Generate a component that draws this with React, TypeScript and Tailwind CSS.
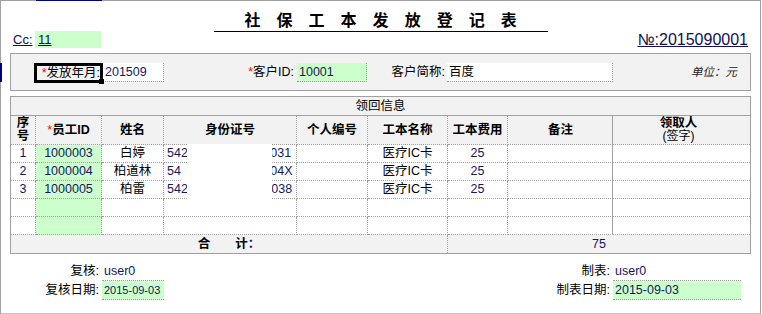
import React from "react";

const rows = [
  { no: "1", id: "1000003", name: "白婷", idc: "542127198811020031", card: "医疗IC卡", fee: "25" },
  { no: "2", id: "1000004", name: "柏道林", idc: "54212719870511204X", card: "医疗IC卡", fee: "25" },
  { no: "3", id: "1000005", name: "柏雷", idc: "542127199002213038", card: "医疗IC卡", fee: "25" },
  { no: "", id: "", name: "", idc: "", card: "", fee: "" },
  { no: "", id: "", name: "", idc: "", card: "", fee: "" },
];

export default function App() {
  const cell = "h-[18px] border-b border-r border-dotted border-[#a0a0a0] leading-[17px] whitespace-nowrap overflow-hidden";
  const head =
    "h-[29px] bg-[#f2f2f2] border-b border-r border-dotted border-[#a0a0a0] flex flex-col items-center justify-center font-bold leading-[13px] whitespace-nowrap";
  return (
    <div className="w-[762px] h-[314px] bg-white text-[12.5px] text-black font-['Liberation_Sans','Noto_Sans_CJK_SC',sans-serif]">
      <div className="relative w-[761px] h-[314px] border border-[#a0a0a0] border-b-[#c4c4c4]">
        <div className="absolute -top-px left-[35px] w-[66px] h-px bg-[#000080]" />
        <div className="absolute -left-px top-[62px] w-[2px] h-[19px] bg-[#000080]" />

        {/* title */}
        <div className="mx-auto w-[334px] h-[31px] border-b border-black pt-[12px] pl-[6px] text-center text-[16px] leading-[16px] font-bold tracking-[5.8px] whitespace-nowrap">
          社 保 工 本 发 放 登 记 表
        </div>

        {/* Cc / No row */}
        <div className="-mt-px flex h-[17px] items-end justify-between pl-[12px] pr-[12px]">
          <div className="flex items-end h-[17px]">
            <span className="w-[22px] text-[13px] leading-[17px] underline text-[#101050]">Cc:</span>
            <span className="w-[66px] h-[17px] bg-[#ccffcc] pl-[3px] text-[13px] leading-[17px] text-[#101050]">
              <span className="underline">11</span>
            </span>
          </div>
          <span className="text-[16px] leading-[17px] underline text-[#101050] font-['Liberation_Sans','DejaVu_Sans',sans-serif]">
            №:2015090001
          </span>
        </div>

        {/* header panel */}
        <div className="mt-[5px] ml-[9px] w-[741px] h-[38px] border border-[#a0a0a0] bg-[#f2f2f2] flex items-start pt-[9px]">
          <div className="w-[23px]" />
          <div className="relative w-[69px] h-[20px] border-[3px] border-black flex items-center justify-end leading-[14px] whitespace-nowrap">
            <span className="text-[#ff0000]">*</span>发放年月:
            <div className="absolute -right-[4px] -bottom-[4px] w-[5px] h-[5px] bg-black" />
          </div>
          <div className="w-[61px] h-[19px] bg-white border-r border-b border-dotted border-[#999] pl-[2px] leading-[18px] text-[#16165e]">
            201509
          </div>
          <div className="w-[133px] h-[19px] text-right pr-[3px] leading-[19px] whitespace-nowrap">
            <span className="text-[#ff0000]">*</span>客户ID:
          </div>
          <div className="w-[70px] h-[19px] bg-[#ccffcc] border-r border-b border-dotted border-[#999] pl-[2px] leading-[18px] text-[#16165e]">
            10001
          </div>
          <div className="w-[80px] h-[19px] text-right pr-[2px] leading-[19px] whitespace-nowrap">客户简称:</div>
          <div className="w-[166px] h-[19px] bg-white border-r border-b border-dotted border-[#999] pl-[2px] leading-[18px]">
            百度
          </div>
          <div className="flex-1 h-[19px] text-right pr-[13px] leading-[19px] italic text-[11.5px] text-[#222]">单位：元</div>
        </div>

        {/* table panel */}
        <div className="relative mt-[5px] ml-[9px] w-[741px] border border-[#a0a0a0]">
          <div className="grid grid-cols-[25px_66px_62px_133px_71px_80px_60px_105px_137px]">
            <div className="col-span-9 h-[19px] bg-[#f2f2f2] border-b border-[#a0a0a0] text-center leading-[18px]">领回信息</div>

            <div className={head}>
              <span>序</span>
              <span>号</span>
            </div>
            <div className={head}>
              <span>
                <span className="text-[#ff0000] font-normal">*</span>员工ID
              </span>
            </div>
            <div className={head}>姓名</div>
            <div className={head}>身份证号</div>
            <div className={head}>个人编号</div>
            <div className={head}>工本名称</div>
            <div className={head}>工本费用</div>
            <div className="h-[29px] bg-[#f2f2f2] border-b border-dotted border-[#a0a0a0] shadow-[inset_-1px_0_0_#a0a0a0] flex items-center justify-center font-bold">
              备注
            </div>
            <div className="h-[29px] bg-[#f2f2f2] border-b border-dotted border-[#a0a0a0] flex flex-col items-center justify-center leading-[13px] pr-[6px]">
              <span className="font-bold">领取人</span>
              <span className="text-[12px]">(签字)</span>
            </div>

            {rows.map((r, i) => (
              <React.Fragment key={i}>
                <div className={`${cell} text-center text-[#16165e]`}>{r.no}</div>
                <div className={`${cell} bg-[#ccffcc] text-center text-[#16165e]`}>{r.id}</div>
                <div className={`${cell} text-center`}>{r.name}</div>
                <div className={`${cell} pl-[3px] text-[#16165e]`}>{r.idc}</div>
                <div className={cell} />
                <div className={`${cell} text-center`}>{r.card}</div>
                <div className={`${cell} text-center text-[#16165e]`}>{r.fee}</div>
                <div className="h-[18px] border-b border-dotted border-[#a0a0a0] shadow-[inset_-1px_0_0_#a0a0a0]" />
                <div className="h-[18px] border-b border-dotted border-[#a0a0a0]" />
              </React.Fragment>
            ))}

            <div className="col-span-6 h-[18px] bg-[#f2f2f2] border-r border-dotted border-[#a0a0a0] text-center leading-[18px] font-bold whitespace-nowrap">
              合　　计<span className="text-[#16165e]">：</span>
            </div>
            <div className="col-span-3 h-[18px] bg-[#f2f2f2] text-center leading-[18px] text-[#16165e]">75</div>
          </div>

          <div className="absolute left-[176px] top-[47px] w-[85px] h-[56px] bg-white" />
          <div className="absolute left-[170px] top-[66px] w-[8px] h-[18px] bg-white" />
        </div>

        {/* footer */}
        <div className="mt-[9px] ml-[9px] w-[741px] flex justify-between pr-[10px]">
          <div className="flex flex-col">
            <div className="flex h-[18px]">
              <div className="w-[92px] text-right pr-[3px] leading-[17px]">复核:</div>
              <div className="w-[62px] border-b border-dotted border-[#999] pl-[2px] leading-[17px] text-[#16165e]">user0</div>
            </div>
            <div className="flex h-[19px]">
              <div className="w-[92px] text-right pr-[3px] leading-[18px]">复核日期:</div>
              <div className="w-[62px] bg-[#ccffcc] border-b border-dotted border-[#999] pl-[2px] leading-[18px] text-[11px] text-[#16165e] whitespace-nowrap">
                2015-09-03
              </div>
            </div>
          </div>
          <div className="flex flex-col">
            <div className="flex h-[18px]">
              <div className="w-[80px] text-right pr-[3px] leading-[17px]">制表:</div>
              <div className="w-[128px] border-b border-dotted border-[#999] pl-[2px] leading-[17px] text-[#16165e]">user0</div>
            </div>
            <div className="flex h-[19px]">
              <div className="w-[80px] text-right pr-[3px] leading-[18px]">制表日期:</div>
              <div className="w-[128px] bg-[#ccffcc] border-b border-dotted border-[#999] pl-[2px] leading-[18px] text-[#16165e]">
                2015-09-03
              </div>
            </div>
          </div>
        </div>
      </div>
    </div>
  );
}
